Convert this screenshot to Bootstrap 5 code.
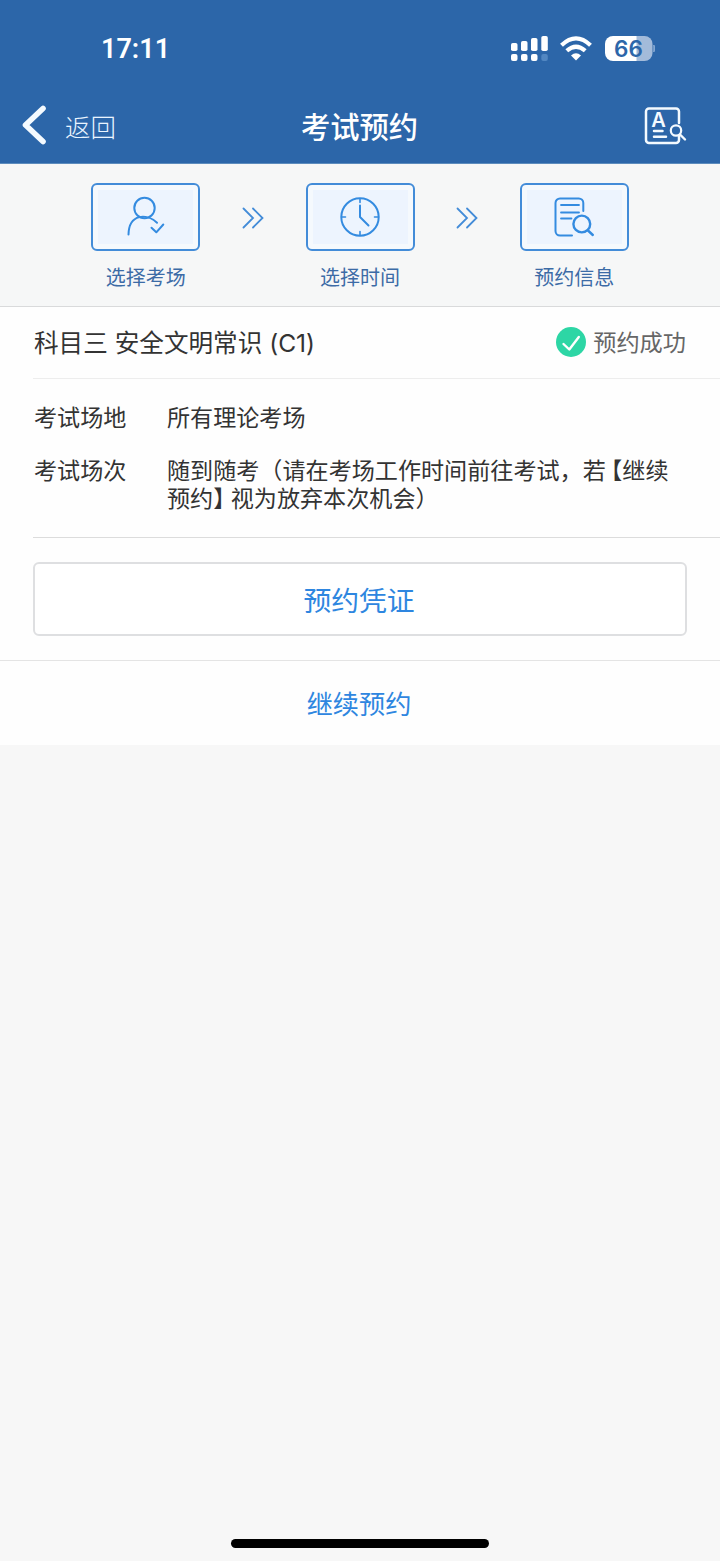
<!DOCTYPE html>
<html lang="zh-CN">
<head>
<meta charset="utf-8">
<meta name="viewport" content="width=device-width, initial-scale=1">
<title>考试预约</title>
<link rel="stylesheet" href="https://cdn.jsdelivr.net/npm/bootstrap@5.3.0/dist/css/bootstrap.min.css">
<style>
  :root { --brand: #2c66a9; --accent: #2e86e0; }
  body { font-family: Inter, "Noto Sans CJK SC", sans-serif; background: #f7f7f7; color: #333; min-height: 1561px; }
  .cjk { font-family: "Noto Sans CJK SC", sans-serif; }
  .app-head { background: var(--brand); height: 164px; border-bottom: 1px solid #5d8cbd; color: #fff; }
  .status-bar { height: 88px; padding: 10px 65px 0 101px; }
  .clock { font-family: Roboto, sans-serif; font-size: 27px; font-weight: 600; line-height: 1; padding-top: 1px; }
  .title-bar { height: 75px; padding: 0 33px 0 22px; display: grid; grid-template-columns: 1fr auto 1fr; }
  .title-bar .back { font-size: 25.5px; line-height: 30px; color: #e9f4ff; font-weight: 300; }
  .back-text { margin-left: 18px; }
  .title-bar h1 { font-size: 29.3px; font-weight: 500; line-height: 36px; padding: 0 0 2px 10px; }
  .steps { height: 143px; padding-top: 19px; background: #f6f7f7; border-bottom: 1px solid #d9dadb; }
  .step-item { width: 109px; }
  .step-box { height: 68px; border: 2px solid #438cd8; border-radius: 6px; background: #f5f9fd; padding: 5px; }
  .step-fill { background: #edf4fe; }
  .step-label { font-size: 20px; line-height: 28px; margin-top: 12px; color: #3c6ba6; white-space: nowrap; }
  .step-gap { width: 105.3px; height: 68px; padding-top: 1px; }
  .booking { padding-left: 33px; background: #fefefe; }
  .booking-head { height: 72px; padding-right: 34px; border-bottom: 1px solid #ededed; }
  .subject { font-size: 24.6px; padding: 2px 0 0 1px; }
  .result { font-size: 23.2px; color: #666; gap: 7px; }
  .result-text { padding-bottom: 2px; }
  .booking-info { height: 159px; padding: 23px 0 0 1px; border-bottom: 1px solid #dcdcdc; font-size: 23.1px; line-height: 28px; }
  .info-label { width: 133px; flex: none; }
  .info-row + .info-row { margin-top: 25px; }
  .bracket { display: inline-block; height: 28px; vertical-align: top; font-feature-settings: "halt"; }
  .bracket-open { margin-left: 5px; }
  .bracket-close { margin-right: 6px; }
  .voucher { padding: 24px 33px; background: #fefefe; border-bottom: 1px solid #e4e4e4; height: 123px; }
  .voucher .btn { height: 74px; border: 2px solid #dedfe1; border-radius: 6px; font-size: 27.8px; color: var(--accent); padding: 2px 2px 0 0; background: #fff; }
  .again { height: 84px; background: #fefefe; color: var(--accent); font-size: 26.2px; text-decoration: none; padding: 2px 2px 0 0; }
  .home-bar { width: 258px; height: 9px; margin-bottom: 13px; border-radius: 5px; background: #000; }
  svg { display: block; flex: none; }
</style>
</head>
<body class="d-flex flex-column">
<header class="app-head flex-shrink-0">
  <div class="status-bar d-flex justify-content-between align-items-center">
    <span class="clock">17:11</span>
    <svg width="146" height="28" viewBox="0 0 146 28">
      <g fill="#fff">
        <rect x="2" y="8" width="6.500" height="8" rx="1.800"/><rect x="12" y="6" width="6.500" height="10" rx="1.800"/>
        <rect x="22" y="3" width="6.500" height="13" rx="1.800"/><rect x="32.300" y="1" width="6.500" height="15" rx="1.800"/>
        <rect x="2" y="19" width="6.500" height="7" rx="2"/><rect x="12" y="19" width="6.500" height="7" rx="2"/><rect x="22" y="19" width="6.500" height="7" rx="2"/>
      </g>
      <rect x="32.300" y="19" width="6.500" height="7" rx="2" fill="#5287c2"/>
      <g fill="none" stroke="#fff" stroke-width="4.200">
        <path d="M52.500 10.200Q67 -3.400 81.500 10.200"/><path d="M57.800 15.800Q67 7.600 76.200 15.800"/>
      </g>
      <path d="M62 20.400Q67 16.200 72 20.400L67 25.500Z" fill="#fff"/>
      <path d="M104 1h24v25h-24a8 8 0 0 1-8-8V9a8 8 0 0 1 8-8z" fill="#fff"/>
      <path d="M127.500 1h8a8 8 0 0 1 8 8v9a8 8 0 0 1-8 8h-8z" fill="#a3bbda"/>
      <path d="M144.800 10q2.800 3.500 0 7z" fill="#86a9d2" stroke="#86a9d2"/>
      <text x="119.500" y="21.700" text-anchor="middle" font-family="Inter, sans-serif" font-size="22.500" font-weight="600" fill="#2c66a9" textLength="29">66</text>
    </svg>
  </div>
  <div class="title-bar align-items-center">
    <div class="back cjk d-flex align-items-center">
      <svg width="25" height="42" viewBox="0 0 25 42"><path d="M21 3.500L3.500 20 21 36.500" fill="none" stroke="#f4faff" stroke-width="5.600" stroke-linecap="round" stroke-linejoin="round"/></svg>
      <span class="back-text">返回</span>
    </div>
    <h1 class="cjk m-0">考试预约</h1>
    <svg class="ms-auto" width="44" height="40" viewBox="0 0 44 40" fill="none" stroke="#f4faff" stroke-width="2.500" stroke-linecap="round">
      <path d="M36 17V5.500a3 3 0 0 0-3-3H6a3 3 0 0 0-3 3v28.500a3 3 0 0 0 3 3h27a3 3 0 0 0 3-3v-4"/>
      <path d="M11 25h8.500M11 30.800h12"/>
      <circle cx="33" cy="24.500" r="5.200" stroke-width="2.200"/><path d="M37 28.500l5 5" stroke-width="2.400"/>
      <text x="15.500" y="20.700" text-anchor="middle" font-family="Inter, sans-serif" font-size="20" font-weight="600" fill="#f4faff" stroke="none">A</text>
    </svg>
  </div>
</header>

<nav class="steps d-flex justify-content-center flex-shrink-0">
  <div class="step-item text-center">
    <div class="step-box"><div class="step-fill h-100 d-flex align-items-center justify-content-center">
      <svg width="42" height="42" viewBox="0 0 42 42" fill="none" stroke="#348be0" stroke-width="2" stroke-linecap="round" stroke-linejoin="round">
        <circle cx="19.500" cy="12" r="10.200"/><path d="M3.500 38.500C4 17 22.500 17.500 32 26.800M26.500 31.800l4.800 4.500 7-7.800"/>
      </svg></div></div>
    <div class="step-label cjk">选择考场</div>
  </div>
  <div class="step-gap d-flex align-items-center justify-content-center">
    <svg width="22" height="22" viewBox="0 0 22 22" fill="none" stroke="#438cd8" stroke-width="1.800" stroke-linecap="round"><path d="M1.500 1.500L11 11l-9.500 9.500M11 1.500L20.500 11 11 20.500"/></svg>
  </div>
  <div class="step-item text-center">
    <div class="step-box"><div class="step-fill h-100 d-flex align-items-center justify-content-center">
      <svg width="42" height="42" viewBox="0 0 42 42" fill="none" stroke="#348be0" stroke-width="2" stroke-linecap="round" stroke-linejoin="round">
        <circle cx="21" cy="21" r="18.700"/><path d="M21 9.500V21l8.500 8.500"/><path d="M21 3v3.500M21 35.500V39M3 21h3.500M35.500 21H39" stroke-width="1.600"/>
      </svg></div></div>
    <div class="step-label cjk">选择时间</div>
  </div>
  <div class="step-gap d-flex align-items-center justify-content-center">
    <svg width="22" height="22" viewBox="0 0 22 22" fill="none" stroke="#438cd8" stroke-width="1.800" stroke-linecap="round"><path d="M1.500 1.500L11 11l-9.500 9.500M11 1.500L20.500 11 11 20.500"/></svg>
  </div>
  <div class="step-item text-center">
    <div class="step-box"><div class="step-fill h-100 d-flex align-items-center justify-content-center">
      <svg width="42" height="42" viewBox="0 0 42 42" fill="none" stroke="#348be0" stroke-width="2" stroke-linecap="round" stroke-linejoin="round">
        <path d="M30.300 15V7a4.500 4.500 0 0 0-4.500-4.500H7A4.500 4.500 0 0 0 2.500 7v28A4.500 4.500 0 0 0 7 39.500h12"/>
        <path d="M8 9h18M8 16.500h18M8 22.500h10.500" stroke-width="1.800"/><circle cx="28.800" cy="28" r="8.400" stroke-width="2.400"/><path d="M35 34.500l4.800 4.500" stroke-width="2.400"/>
      </svg></div></div>
    <div class="step-label cjk">预约信息</div>
  </div>
</nav>

<main class="flex-grow-1">
  <section class="booking">
    <div class="booking-head d-flex align-items-center justify-content-between">
      <div class="subject">科目三 安全文明常识 (C1)</div>
      <div class="result cjk d-flex align-items-center">
        <svg width="30" height="30" viewBox="0 0 30 30"><circle cx="15" cy="15" r="15" fill="#2dd6a5"/><path d="M7.500 17l5.800 5.500L22.800 10" fill="none" stroke="#fff" stroke-width="2.400" stroke-linecap="round" stroke-linejoin="round"/></svg>
        <span class="result-text">预约成功</span>
      </div>
    </div>
    <div class="booking-info cjk">
      <div class="info-row d-flex"><div class="info-label">考试场地</div><div>所有理论考场</div></div>
      <div class="info-row d-flex"><div class="info-label">考试场次</div><div class="text-nowrap">随到随考（请在考场工作时间前往考试，若<span class="bracket bracket-open">【</span>继续<br>预约<span class="bracket bracket-close">】</span>视为放弃本次机会）</div></div>
    </div>
  </section>
  <section class="voucher"><button type="button" class="btn w-100 cjk">预约凭证</button></section>
  <a href="#" class="again cjk d-flex align-items-center justify-content-center">继续预约</a>
</main>
<div class="home-bar mx-auto"></div>
<script src="https://cdn.jsdelivr.net/npm/bootstrap@5.3.0/dist/js/bootstrap.bundle.min.js"></script>
</body>
</html>
